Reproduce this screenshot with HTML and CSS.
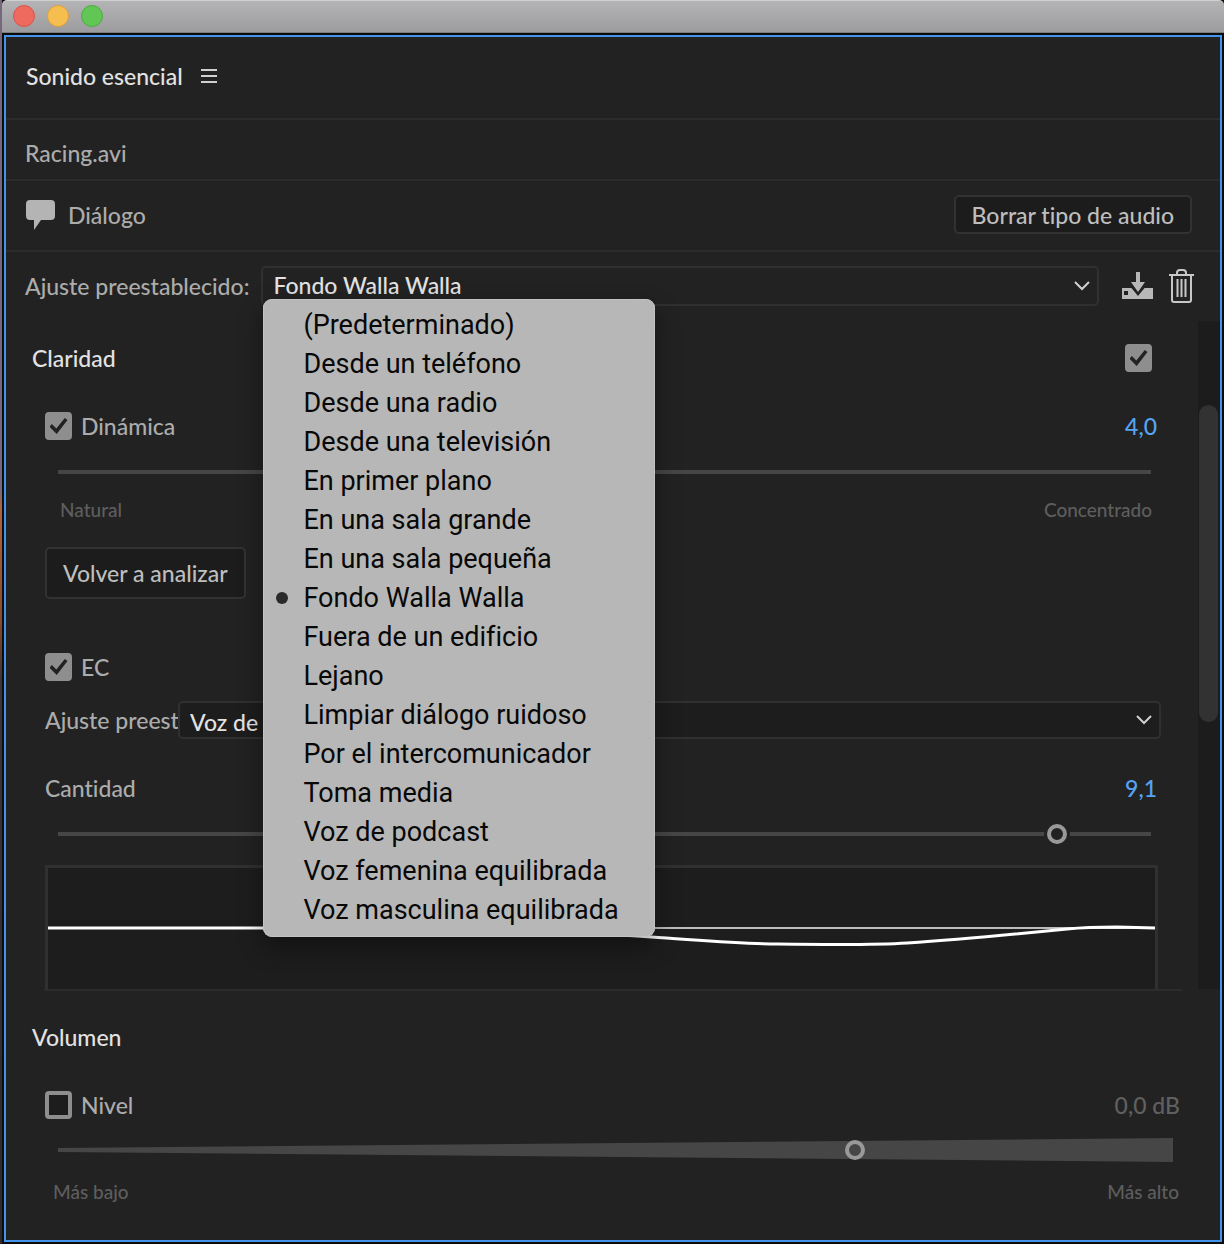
FILE: index.html
```html
<!DOCTYPE html>
<html lang="es">
<head>
    <meta charset="UTF-8">
    <meta name="viewport" content="width=device-width, initial-scale=1.0">
    <title>Sonido esencial</title>
    <link rel="stylesheet" href="styles.css">
</head>
<body>
    <!-- Barra de título de la ventana -->
    <div class="titlebar">
        <button type="button" class="dot dot-close" aria-label="Cerrar"></button>
        <button type="button" class="dot dot-min" aria-label="Minimizar"></button>
        <button type="button" class="dot dot-max" aria-label="Maximizar"></button>
    </div>

    <main class="window">
        <header class="panel-header">
            <h1>Sonido esencial</h1>
            <button type="button" class="icon-button" aria-label="Menú del panel">
                <svg width="16" height="16" viewBox="0 0 16 16"><path d="M0 2h16M0 8h16M0 14h16" stroke="#d0d0d0" stroke-width="2"/></svg>
            </button>
        </header>

        <div class="file-row">Racing.avi</div>

        <div class="type-row">
            <svg width="30" height="30" viewBox="0 0 30 30"><path d="M4 0h21a4 4 0 0 1 4 4v12a4 4 0 0 1-4 4H15L8 30V20H4a4 4 0 0 1-4-4V4a4 4 0 0 1 4-4z" fill="#b4b4b4"/></svg>
            <span>Diálogo</span>
            <button type="button" class="button push">Borrar tipo de audio</button>
        </div>

        <div class="preset-row">
            <label for="preset">Ajuste preestablecido:</label>
            <div class="select preset-select">
                <select id="preset">
                    <option>Fondo Walla Walla</option>
                </select>
                <svg class="chevron" width="16" height="10" viewBox="0 0 16 10"><path d="M1 1l7 7 7-7" fill="none" stroke="#d0d0d0" stroke-width="2"/></svg>

                <!-- Lista desplegada -->
                <ul class="menu" role="listbox" aria-label="Ajuste preestablecido">
                    <li role="option">(Predeterminado)</li>
                    <li role="option">Desde un teléfono</li>
                    <li role="option">Desde una radio</li>
                    <li role="option">Desde una televisión</li>
                    <li role="option">En primer plano</li>
                    <li role="option">En una sala grande</li>
                    <li role="option">En una sala pequeña</li>
                    <li role="option" aria-selected="true" class="selected">Fondo Walla Walla</li>
                    <li role="option">Fuera de un edificio</li>
                    <li role="option">Lejano</li>
                    <li role="option">Limpiar diálogo ruidoso</li>
                    <li role="option">Por el intercomunicador</li>
                    <li role="option">Toma media</li>
                    <li role="option">Voz de podcast</li>
                    <li role="option">Voz femenina equilibrada</li>
                    <li role="option">Voz masculina equilibrada</li>
                </ul>
            </div>
            <button type="button" class="icon-button save" aria-label="Guardar ajuste">
                <svg width="32" height="30" viewBox="0 0 32 30">
                    <path d="M0 17h31v11H0z" fill="#b8b8b8"/>
                    <path d="M7 14h18l-9 11z" fill="#222"/>
                    <path d="M2 20h4v4H2z" fill="#222"/>
                    <path d="M14 1h4v10h5l-7 10-7-10h5z" fill="#b8b8b8"/>
                </svg>
            </button>
            <button type="button" class="icon-button" aria-label="Eliminar ajuste">
                <svg width="26" height="34" viewBox="0 0 26 34" fill="none" stroke="#c8c8c8" stroke-width="2">
                    <path d="M0 6h25M8 5V4q0-3 3-3h3q3 0 3 3v1M3 6v25q0 2 2 2h15q2 0 2-2V6"/>
                    <path d="M8.500 10v18M12.500 10v18M16.500 10v18"/>
                </svg>
            </button>
        </div>

        <div class="scroll-area">
            <section class="clarity">
                <div class="row section-title">
                    <h2>Claridad</h2>
                    <input type="checkbox" class="check push" aria-label="Claridad" checked>
                </div>

                <div class="row indent">
                    <input type="checkbox" class="check" id="dinamica" checked>
                    <label for="dinamica">Dinámica</label>
                    <output class="value push" for="dinamica-rango">4,0</output>
                </div>
                <input type="range" class="slider" id="dinamica-rango" aria-label="Dinámica" min="0" max="10" step="0.1" value="4">
                <div class="range-labels">
                    <span>Natural</span>
                    <span>Concentrado</span>
                </div>

                <button type="button" class="button analyze">Volver a analizar</button>

                <div class="row indent">
                    <input type="checkbox" class="check" id="ec" checked>
                    <label for="ec">EC</label>
                </div>
                <div class="eq-row">
                    <label for="ec-preset">Ajuste preest</label>
                    <div class="select">
                        <select id="ec-preset">
                            <option>Voz de podcast</option>
                        </select>
                        <svg class="chevron" width="16" height="10" viewBox="0 0 16 10"><path d="M1 1l7 7 7-7" fill="none" stroke="#d0d0d0" stroke-width="2"/></svg>
                    </div>
                </div>

                <div class="row indent amount">
                    <label for="cantidad">Cantidad</label>
                    <output class="value push" for="cantidad">9,1</output>
                </div>
                <input type="range" class="slider" id="cantidad" min="0" max="10" step="0.01" value="9.14">

                <div class="curve">
                    <svg viewBox="0 0 1108 120" preserveAspectRatio="none" fill="none">
                        <path d="M0 60H1108" stroke="#b9bdbd" stroke-width="2"/>
                        <path d="M0 60H340C460 60 540 64 604 69C650 72 690 76 730 76C800 77 830 77 860 75C920 71 980 65 1020 61Q1040 59 1070 59L1108 60" stroke="#fff" stroke-width="3"/>
                    </svg>
                </div>
            </section>
            <div class="scrollbar"><div class="thumb"></div></div>
        </div>

        <section class="volume">
            <div class="row">
                <h2>Volumen</h2>
            </div>
            <div class="row indent level">
                <input type="checkbox" class="check" id="nivel">
                <label for="nivel">Nivel</label>
                <output class="value off push" for="nivel-rango">0,0 dB</output>
            </div>
            <div class="wedge">
                <input type="range" class="slider" id="nivel-rango" aria-label="Nivel" min="0" max="1000" value="715">
            </div>
            <div class="range-labels">
                <span>Más bajo</span>
                <span>Más alto</span>
            </div>
        </section>
    </main>
</body>
</html>
```
FILE: styles.css
```css
* {
    box-sizing: border-box;
}

body {
    margin: 0;
    min-height: 100vh;
    display: flex;
    flex-direction: column;
    padding: 0 2px 2px;
    background: linear-gradient(#74697c 0, #74697c 490px, #b0643c 510px, #8a4a2c 620px, #3a3538 680px, #2c2a2e 100%) 0 0 / 2px 100% no-repeat #0c0c0d;
    font-family: Lato, sans-serif;
    font-size: 23px;
    font-weight: 500;
    line-height: 28px;
    font-variant-ligatures: none;
    color: #acacac;
}

h1, h2 {
    margin: 0;
    font-size: 23px;
    font-weight: 500;
    color: #e2e2e2;
}

button, select {
    font: inherit;
    color: inherit;
}

.titlebar {
    display: flex;
    align-items: center;
    gap: 12px;
    height: 33px;
    padding: 0 11px 1px;
    margin-right: -2px;
    background: linear-gradient(#b4b3b5, #9c9b9d);
    border-top: 1px solid #cfcfd0;
    border-bottom: 1px solid #7c7c7c;
    border-radius: 5px 5px 0 0;
}

.dot {
    width: 22px;
    height: 22px;
    padding: 0;
    border: 1px solid;
    border-radius: 50%;
}

.dot-close {
    background: #ee6a5f;
    border-color: #d9544a;
}

.dot-min {
    background: #f6be4f;
    border-color: #dfa23a;
}

.dot-max {
    background: #62c654;
    border-color: #4bac3f;
}

.window {
    flex: 1;
    display: flex;
    flex-direction: column;
    margin: 2px 0 0 2px;
    border: 2px solid #4594ec;
    background: #222222;
}

.icon-button {
    display: flex;
    padding: 0;
    border: 0;
    background: none;
}

.push {
    margin-left: auto;
}

.panel-header {
    display: flex;
    align-items: center;
    gap: 18px;
    height: 83px;
    padding: 0 20px 4px;
    border-bottom: 2px solid #2c2c2c;
}

.file-row {
    height: 61px;
    padding: 19px 19px 0;
    border-bottom: 2px solid #2c2c2c;
}

.type-row {
    display: flex;
    align-items: center;
    gap: 12px;
    height: 71px;
    padding: 0 28px 2px 20px;
    border-bottom: 2px solid #2c2c2c;
}

.button {
    padding: 0 16px;
    border: 2px solid #323232;
    border-radius: 5px;
    background: #1c1c1c;
    color: #bebebe;
}

.type-row .button {
    height: 39px;
}

.preset-row {
    display: flex;
    align-items: center;
    height: 69px;
    padding: 0 25px 2px 19px;
}

.select {
    position: relative;
    flex: 1;
}

.select select {
    display: block;
    width: 100%;
    height: 100%;
    padding: 0 40px 2px 10px;
    border: 2px solid #303030;
    border-radius: 5px;
    background: #1d1d1d;
    color: #e2e2e2;
    appearance: none;
}

.preset-select {
    height: 40px;
    margin: 0 23px 0 12px;
}

.preset-select select {
    background: #222222;
}

.save {
    margin-right: 15px;
}

/* la flecha va encima del select */
.chevron {
    position: absolute;
    right: 9px;
    top: 50%;
    margin-top: -5px;
    pointer-events: none;
}

.menu {
    position: absolute;
    z-index: 10;
    top: 33px;
    left: 2px;
    width: 392px;
    margin: 0;
    padding: 7px 0;
    list-style: none;
    border-radius: 9px;
    background: #b7b7b7;
    box-shadow: inset 0 0 0 1px #c2c2c2, 0 10px 24px rgba(0, 0, 0, 0.4);
    font-family: Roboto, sans-serif;
    font-size: 27px;
    font-weight: 400;
    line-height: 39px;
    color: #080808;
}

.menu li {
    display: flex;
    align-items: center;
    height: 39px;
    padding-left: 40px;
}

.menu .selected {
    padding-left: 13px;
    gap: 15px;
}

.menu .selected::before {
    content: "";
    width: 12px;
    height: 12px;
    border-radius: 50%;
    background: #2a2a2a;
}

.scroll-area {
    display: flex;
}

.clarity {
    flex: 1;
    min-width: 0;
    padding: 13px 16px 0 26px;
}

.row {
    display: flex;
    align-items: center;
    height: 48px;
    gap: 9px;
}

.section-title {
    padding-right: 30px;
    margin-bottom: 20px;
}

.indent {
    padding: 0 25px 0 13px;
}

.check {
    display: grid;
    place-content: center;
    width: 27px;
    height: 28px;
    margin: 0;
    border: 4px solid #8e8e8e;
    border-radius: 4px;
    background: #1d1d1d;
    appearance: none;
}

.check.push {
    margin-left: auto;
}

.check:checked {
    background: #8e8e8e;
}

.check:checked::before {
    content: "";
    width: 18px;
    height: 16px;
    background: #222222;
    clip-path: polygon(0 54%, 13% 38%, 38% 66%, 85% 0, 100% 13%, 40% 100%);
}

.value {
    color: #55a4f2;
}

.value.off {
    color: #606060;
}

.slider {
    display: block;
    width: calc(100% - 37px);
    height: 28px;
    margin: 8px 21px 0 16px;
    background: linear-gradient(#464646, #464646) center / calc(100% - 20px) 4px no-repeat;
    appearance: none;
}

.slider::-webkit-slider-thumb {
    width: 20px;
    height: 20px;
    border: 4px solid #999999;
    border-radius: 50%;
    background: #222222;
    box-shadow: 0 0 0 3px #222222;
    appearance: none;
}

.range-labels {
    display: flex;
    justify-content: space-between;
    padding: 0 30px 0 28px;
    margin-top: 10px;
    font-size: 19px;
    color: #5e5e5e;
}

.analyze {
    display: block;
    height: 52px;
    margin: 23px 0 44px 13px;
}

.eq-row {
    display: flex;
    height: 38px;
    margin: 10px 21px 0 13px;
    line-height: 38px;
}

.eq-row label {
    width: 133px;
    white-space: nowrap;
}

.amount {
    margin-top: 25px;
}

.curve {
    height: 124px;
    margin: 17px 24px 0 13px;
    border: solid #303030;
    border-width: 3px 3px 0;
    background: #1d1d1d;
}

.curve svg {
    display: block;
    width: 100%;
    height: 120px;
}

.scrollbar {
    width: 22px;
    padding: 84px 2px 0 1px;
    background: #1c1c1c;
}

.scrollbar .thumb {
    height: 317px;
    border-radius: 10px;
    background: #323232;
}

.volume {
    padding: 0 38px 0 26px;
}

/* separador que no llega a los bordes */
.volume::before {
    content: "";
    display: block;
    height: 2px;
    margin: 0 0 22px 12px;
    background: #2c2c2c;
}

.level {
    margin-top: 20px;
    padding-right: 2px;
}

.wedge {
    margin: 7px 9px 0 26px;
    position: relative;
}

/* cuña de volumen detrás del control */
.wedge::before {
    content: "";
    position: absolute;
    inset: 2px 0;
    background: #464646;
    clip-path: polygon(0 42%, 100% 0, 100% 100%, 0 58%);
}

.wedge .slider {
    position: relative;
    width: calc(100% + 20px);
    margin: 0 -10px;
    background: none;
}

.wedge .slider::-webkit-slider-thumb {
    background: #464646;
    box-shadow: none;
}

.volume .range-labels {
    margin-top: 14px;
    padding: 0 3px 0 21px;
}
```
